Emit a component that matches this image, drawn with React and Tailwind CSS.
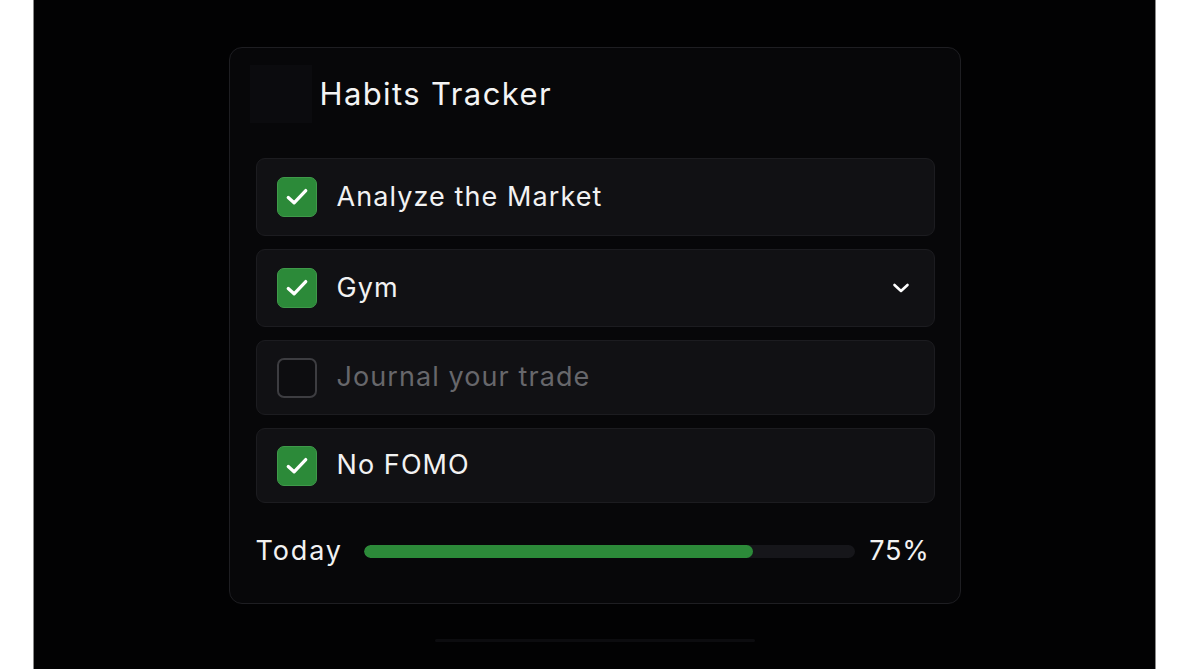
import React from "react";

const font = { fontFamily: "Inter, 'Noto Sans', sans-serif" };

function Check({ checked }) {
  if (!checked) {
    return (
      <div className="w-[40px] h-[40px] shrink-0 rounded-[7px] border-2 border-[#3d3d41] bg-[#0d0d10]" />
    );
  }
  return (
    <div className="w-[40px] h-[40px] shrink-0 rounded-[7px] border border-[#3f9a4a] bg-[#2c8a39] flex items-center justify-center">
      <svg width="28" height="28" viewBox="0 0 24 24" fill="none">
        <path d="M4.5 12.5 L9.5 17 L19.5 6.5" stroke="#ffffff" strokeWidth="2.8" strokeLinecap="round" strokeLinejoin="round" />
      </svg>
    </div>
  );
}

function Row({ label, checked, chevron, h }) {
  return (
    <div className={`flex items-center rounded-[9px] border border-[#1c1c20] bg-[#111114] pl-[20px] pr-[24px] ${h}`}>
      <Check checked={checked} />
      <span
        className={`ml-[20px] text-[27px] tracking-[0.04em] ${checked ? "text-[#f2f2f2]" : "text-[#67676b]"}`}
        style={font}
      >
        {label}
      </span>
      {chevron && (
        <svg className="ml-auto" width="18" height="12" viewBox="0 0 18 12" fill="none">
          <path d="M2.5 3 L9 9 L15.5 3" stroke="#ffffff" strokeWidth="2.6" strokeLinecap="round" strokeLinejoin="round" />
        </svg>
      )}
    </div>
  );
}

export default function App() {
  return (
    <div className="w-[1188px] h-[669px] bg-white flex pl-[33px] pr-[32px]">
      <div className="flex-1 h-full bg-[#020203] border-x border-[#8a8a8a] flex flex-col items-center pt-[47px]">
        <div className="w-[732px] h-[557px] rounded-[13px] border border-[#1e1e22] bg-[#070709] flex flex-col pl-[26px] pr-[25px]">
          <div className="flex items-center h-[58px] mt-[17px] mb-[35px] -ml-[6px]">
            <div className="w-[62px] h-[58px] bg-[#0b0b0e]" />
            <span className="ml-[8px] text-[31px] tracking-[0.045em] text-[#f4f4f4]" style={font}>
              Habits Tracker
            </span>
          </div>
          <div className="flex flex-col gap-[13px]">
            <Row label="Analyze the Market" checked h="h-[78px]" />
            <Row label="Gym" checked chevron h="h-[78px]" />
            <Row label="Journal your trade" checked={false} h="h-[75px]" />
            <Row label="No FOMO" checked h="h-[75px]" />
          </div>
          <div className="flex items-center mt-[29px] h-[38px]">
            <span className="text-[27px] tracking-[0.07em] text-[#f2f2f2] w-[108px] shrink-0" style={font}>
              Today
            </span>
            <div className="w-[491px] h-[13px] rounded-full bg-[#16161a] overflow-hidden">
              <div className="h-full w-[389px] rounded-full bg-[#2c8a39]" />
            </div>
            <span className="ml-auto mr-[5px] text-[27px] tracking-[0.03em] text-[#f2f2f2]" style={font}>
              75%
            </span>
          </div>
        </div>
        <div className="mt-[35px] w-[320px] h-[3px] rounded-full bg-[#0c0c0f]" />
      </div>
    </div>
  );
}
